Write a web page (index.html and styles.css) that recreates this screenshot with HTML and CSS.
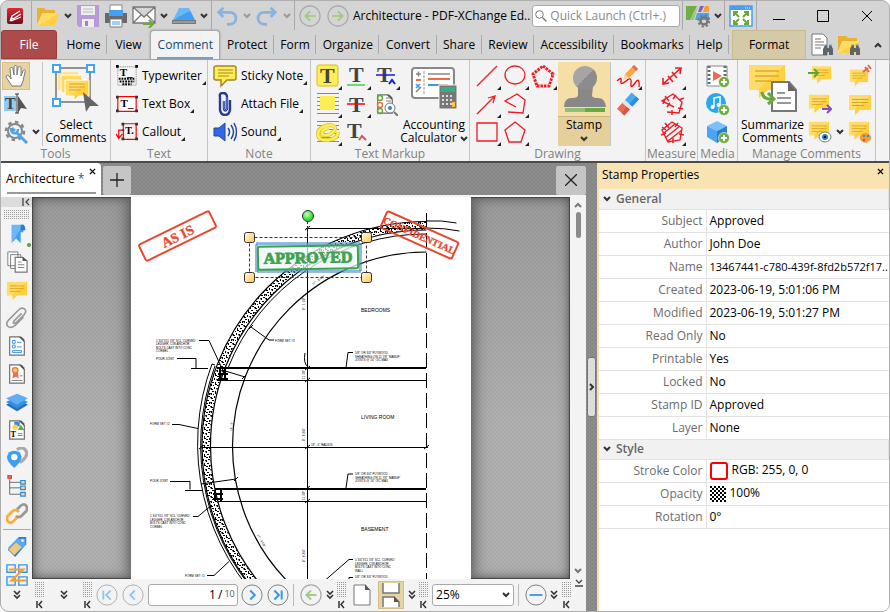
FILE: index.html
```html
<!DOCTYPE html>
<html lang="en">
<head>
    <meta charset="UTF-8">
    <meta name="viewport" content="width=device-width, initial-scale=1.0">
    <title>Architecture - PDF-XChange Editor</title>
    <link rel="stylesheet" href="styles.css">
</head>
<body>
    <!-- Icon sprite -->
    <svg class="sprite" aria-hidden="true">
        <defs>
            <linearGradient id="gold" x1="0" y1="0" x2="1" y2="1"><stop offset=".5" stop-color="#ffdc6a"/><stop offset=".5" stop-color="#ffd040"/></linearGradient>
            <linearGradient id="redlogo" x1="0" y1="0" x2="0" y2="1"><stop offset="0" stop-color="#e02a35"/><stop offset="1" stop-color="#6d0f16"/></linearGradient>
            <linearGradient id="sky" x1="0" y1="0" x2="1" y2="1"><stop offset=".5" stop-color="#6bb8f8"/><stop offset=".5" stop-color="#3fa0f5"/></linearGradient>
            <linearGradient id="grey" x1="0" y1="0" x2="1" y2="1"><stop offset=".5" stop-color="#a5a5a5"/><stop offset=".5" stop-color="#8c8c8c"/></linearGradient>
            <linearGradient id="handle" x1="0" y1="0" x2="1" y2="1"><stop offset="0" stop-color="#fffbe8"/><stop offset="1" stop-color="#ffc64d"/></linearGradient>
            <radialGradient id="knob" cx=".4" cy=".35"><stop offset="0" stop-color="#c4ffb8"/><stop offset="1" stop-color="#35dd35"/></radialGradient>
            <pattern id="checks" width="4" height="4" patternUnits="userSpaceOnUse"><path d="M0 0h2v2h2v2h-2v-2h-2z"/></pattern>
            <pattern id="concrete" width="11" height="9" patternUnits="userSpaceOnUse"><path d="M0 1h2v1h1v1H1zM4 0h1v2H4zM6 1h2v2H7zM9 0h2v1H9zM2 4h2v1H2zM5 4h1v2h1v1H5zM8 4h2v1H8zM0 6h2v2H1zM3 7h1v1H3zM7 7h2v1H7zM10 6h1v2h-1z" fill="#000"/></pattern>
        </defs>

        <symbol id="chev" viewBox="0 0 8 6"><path d="M1 1l3 3 3-3" fill="none" stroke="currentColor" stroke-width="2"/></symbol>
        <symbol id="dchev" viewBox="0 0 8 10"><path d="M1 1l3 3 3-3M1 5l3 3 3-3" fill="none" stroke="#333" stroke-width="1.6"/></symbol>
        <symbol id="grip" viewBox="0 0 9 27"><g stroke="#999" stroke-dasharray="1 1"><path d="M.5 0v16M2.5 0v16M4.5 0v16M6.5 0v16M8.5 0v16"/></g><path d="M2 19v7M7 19L4 22.500l3 3.500" fill="none" stroke="#333" stroke-width="1.500"/></symbol>
        <symbol id="note" viewBox="0 0 24 24"><path d="M1 3h22v15H12l-5 5v-5H1z" fill="url(#gold)"/><path d="M4 7.500h16M4 10.500h16M4 13.500h12" stroke="#d9a51c"/></symbol>
        <symbol id="paper" viewBox="0 0 24 24"><path d="M4 2h11l5 5v15H4z" fill="#fff" stroke="#707070" stroke-width="1.300"/><path d="M14 2l6 6V5l-3-3z" fill="#555"/></symbol>
        <symbol id="binoc" viewBox="0 0 12 12"><path d="M1 5l2-4h2v3h2V1h2l2 4v6H7V8H5v3H1z" fill="#5f6468"/><path d="M2 1h3M7 1h3" stroke="#55aaf0"/></symbol>
        <symbol id="plus" viewBox="0 0 12 12"><circle cx="6" cy="6" r="5.500" fill="#6fae3c" stroke="#fff" stroke-width=".6"/><path d="M6 3v6M3 6h6" stroke="#fff" stroke-width="2"/></symbol>

        <symbol id="logo" viewBox="0 0 16 16"><rect width="16" height="16" rx="2" fill="url(#redlogo)"/><path d="M3 13l2-5 8-5M6 11l8-5M4 13l10-4M3 13l3-3" stroke="#fff" stroke-width="1.300" fill="none"/></symbol>
        <symbol id="open" viewBox="0 0 24 24"><path d="M1 4h7l2 2h9v5H6L1 20z" fill="#e9b22c"/><path d="M6 9h17l-4 13H1z" fill="url(#gold)"/></symbol>
        <symbol id="save" viewBox="0 0 24 24"><path d="M1 1h22v22H3l-2-2z" fill="#b79ad8"/><path d="M5 2h14v9H5z" fill="#eee"/><path d="M7 5h10M7 8h10" stroke="#bbb"/><path d="M6 15h12v8H6z" fill="#eee"/><path d="M9 17h3v5H9z" fill="#a080c8"/></symbol>
        <symbol id="print" viewBox="0 0 24 24"><path d="M6 1h12v7H6z" fill="#fff" stroke="#888"/><path d="M1 9h4V6h14v3h4v10H1z" fill="#696969"/><path d="M5 6h14v6H5z" fill="#439ff0"/><path d="M6 15h12v8H6z" fill="#fff" stroke="#777"/><path d="M8 18h8M8 20h8" stroke="#439ff0"/></symbol>
        <symbol id="mail" viewBox="0 0 24 24"><path d="M1 3h22v16H1zM1 3l11 10L23 3M1 19l8-8M23 19l-8-8" fill="#fff" stroke="#777" stroke-width="1.300"/><path d="M11 20h10M17 16l4 4-4 4" fill="none" stroke="#6aac36" stroke-width="2"/></symbol>
        <symbol id="scan" viewBox="0 0 24 24"><path d="M7 4h10l6 12H1z" fill="url(#sky)"/><path d="M0 16h24v4H0z" fill="#777"/><path d="M1 18h22" stroke="#bbb"/></symbol>
        <symbol id="undo" viewBox="0 0 24 24"><path d="M8 3L3 8l5 5M3 8h12c9 0 9 13 0 13h-3" fill="none" stroke="#83b4e2" stroke-width="3"/></symbol>
        <symbol id="redo" viewBox="0 0 24 24"><path d="M16 3l5 5-5 5M21 8H9c-9 0-9 13 0 13h3" fill="none" stroke="#83b4e2" stroke-width="3"/></symbol>
        <symbol id="back" viewBox="0 0 24 24"><circle cx="12" cy="12" r="11" fill="none" stroke="#a9a9a9" stroke-width="1.300"/><path d="M18 12H7M12 7l-5 5 5 5" fill="none" stroke="#a5cb87" stroke-width="2.200"/></symbol>
        <symbol id="fwd" viewBox="0 0 24 24"><circle cx="12" cy="12" r="11" fill="none" stroke="#a9a9a9" stroke-width="1.300"/><path d="M6 12h11M12 7l5 5-5 5" fill="none" stroke="#a5cb87" stroke-width="2.200"/></symbol>
        <symbol id="search" viewBox="0 0 12 12"><circle cx="4.500" cy="4.500" r="3.800" fill="none" stroke="#777"/><path d="M7.500 7.500l4 4" stroke="#777" stroke-width="1.300"/></symbol>
        <symbol id="theme" viewBox="0 0 24 24"><path d="M0 2h11L4 16H0z" fill="#70ad47"/><path d="M12 2L8 16H4z" fill="#9bc96f"/><path d="M14 2h4l-3 6h-3z" fill="#8858d0"/><path d="M19 2h4v6h-6z" fill="#f59b38"/><path d="M11 9h12v7H9z" fill="#4da3ef"/><circle cx="18" cy="17" r="3.500" fill="none" stroke="#777" stroke-width="2.500"/><circle cx="18" cy="17" r="5.500" fill="none" stroke="#777" stroke-width="2" stroke-dasharray="2.200 2.100"/></symbol>
        <symbol id="full" viewBox="0 0 24 24"><path d="M1 2h22v20H1z" fill="#fff" stroke="#469ff0" stroke-width="1.500"/><path d="M1 2h22v4H1z" fill="#469ff0"/><path d="M16 4h5" stroke="#fff" stroke-dasharray="1 1"/><path d="M5 12V8h4M15 8h4v4M5 16v4h4M19 16v4h-4M5 8l5 5M19 8l-5 5M5 20l5-5M19 20l-5-5" fill="none" stroke="#6aa83c" stroke-width="2"/></symbol>
        <symbol id="finddoc" viewBox="0 0 24 24"><path d="M2 1h11l4 4v17H2z" fill="#fff" stroke="#777"/><path d="M5 6h6M5 9h9M5 12h9M5 15h6" stroke="#777"/><use href="#binoc" x="12" y="11" width="12" height="12"/></symbol>
        <symbol id="finddir" viewBox="0 0 24 24"><path d="M1 3h8l2 2h9v4H5L1 18z" fill="#e9b22c"/><path d="M5 8h18l-4 12H1z" fill="url(#gold)"/><use href="#binoc" x="12" y="11" width="12" height="12"/></symbol>

        <symbol id="hand" viewBox="0 0 24 24"><path d="M8 22L2 13c0-2 2-2 3-1l2 3L6 5c0-2 3-2 3 0l1 6V3c0-2 3-2 3 0v8l1-7c0-2 3-2 3 0v8l2-5c1-2 3-1 2 1l-2 9-2 5z" fill="#fff" stroke="#777"/></symbol>
        <symbol id="gear" viewBox="0 0 24 24"><circle cx="11" cy="11" r="7" fill="none" stroke="#888" stroke-width="2"/><circle cx="11" cy="11" r="9" fill="none" stroke="#888" stroke-width="2.500" stroke-dasharray="3.500 3.500"/><path d="M12 12l11 11" stroke="#4ea3ea" stroke-width="3"/><path d="M7 8c0 7 7 7 7 1M8 8l3 3" fill="none" stroke="#4ea3ea" stroke-width="2.500"/></symbol>
        <symbol id="selcom" viewBox="0 0 48 48"><path d="M4 4h34v34H4z" fill="none" stroke="#929292" stroke-width="2"/><path d="M6 8h20v18H6z" fill="#ffe28a"/><path d="M9 11h21v18H9z" fill="#ffd95e" stroke="#fff"/><path d="M13 16h24v16H27l-5 5v-5h-9z" fill="url(#gold)" stroke="#fff"/><path d="M17 20h16M17 23h16M17 26h12" stroke="#d9a51c"/><g fill="#fff" stroke="#43a3f4" stroke-width="2"><path d="M1 1h7v7H1zM35 1h7v7h-7zM1 35h7v7H1z"/></g><path d="M31 28l16 14-9 0-4 6z" fill="#666"/></symbol>
        <symbol id="sticky" viewBox="0 0 24 24"><path d="M3 2h18q2 0 2 2v10q0 2-2 2h-7l-6 6v-6H3q-2 0-2-2V4q0-2 2-2z" fill="#ffee55" stroke="#a48724" stroke-width="1.500"/><path d="M5 6h15M5 9h15M5 12h11" stroke="#a48724"/></symbol>
        <symbol id="attach" viewBox="0 0 24 24"><path d="M11 9v8q1 3 3 0V5q0-4-4-4T7 5v13q1 5 5 5t5-5V8" fill="none" stroke="#253b8f" stroke-width="2.400"/><path d="M11 9v8q1 3 3 0V5" fill="none" stroke="#6f89dd"/></symbol>
        <symbol id="sound" viewBox="0 0 24 24"><path d="M1 8h5l6-5v18l-6-5H1z" fill="#3366e8" stroke="#22459e"/><path d="M15 8q3 4 0 8M18 5q5 7 0 14M21 3q5 9 0 18" fill="none" stroke="#2d48a6" stroke-width="1.500"/></symbol>
        <symbol id="area" viewBox="0 0 24 24"><path d="M1 1.500h22M1 5.500h22M1 9.500h22M1 13.500h22M1 17.500h22M1 21.500h22" stroke="#888"/><path d="M4 4h15v14H4z" fill="#ffed55"/></symbol>
        <symbol id="check" viewBox="0 0 24 24"><use href="#paper" width="22" height="24"/><path d="M12 6h5M12 9h5M12 19h4" stroke="#777"/><circle cx="6" cy="6" r="2.500" fill="none" stroke="#68a93e" stroke-width="1.500"/><circle cx="6" cy="13" r="2.500" fill="none" stroke="#f07145" stroke-width="1.500"/><circle cx="6" cy="19" r="2.500" fill="none" stroke="#68a93e" stroke-width="1.500"/><circle cx="16" cy="16" r="5" fill="#fff" stroke="#777"/><circle cx="16" cy="16" r="2" fill="#2489da"/><path d="M20 20l4 4" stroke="#777" stroke-width="2"/></symbol>
        <symbol id="scribble" viewBox="0 0 24 24"><path d="M1 1.500h22M1 5.500h22M1 9.500h22M1 13.500h22M1 17.500h22M1 21.500h22" stroke="#888"/><path d="M13 8q-7 1-7 5t9 1q9-8-2-9Q2 7 2 14t10 6 10-8" fill="none" stroke="#d9c62c" stroke-width="4"/><path d="M13 8q-7 1-7 5t9 1q9-8-2-9Q2 7 2 14t10 6 10-8" fill="none" stroke="#ffed55" stroke-width="2.500"/></symbol>
        <symbol id="calc" viewBox="0 0 48 44"><rect x="2" y="2" width="42" height="30" rx="3" fill="#fff" stroke="#888" stroke-width="2"/><path d="M14 5v24" stroke="#999" stroke-dasharray="3 1"/><path d="M18 8h22M18 19h20" stroke="#888" stroke-width="1.500"/><path d="M18 13h22" stroke="#f06c43" stroke-width="2"/><path d="M18 19h10" stroke="#399be8" stroke-width="2"/><path d="M6 8h5M8.500 5.500v5M6 26l5-5" stroke="#888" stroke-width="1.500"/><path d="M6 14h5" stroke="#f06c43" stroke-width="2"/><path d="M6 18l4 4M10 18l-4 4" stroke="#399be8" stroke-width="1.500"/><rect x="29" y="19" width="18" height="24" rx="1" fill="#777" stroke="#f4f4f4"/><path d="M31 21h14v5H31z" fill="#37ad82"/><path d="M32 30h12M32 34h12M32 38h12" stroke="#ddd" stroke-width="2" stroke-dasharray="2 2"/><path d="M42 36h3v5h-3z" fill="#ffc23c"/></symbol>
        <symbol id="line" viewBox="0 0 24 24"><path d="M2 22L22 2" stroke="#ed1c24" stroke-width="1.300"/></symbol>
        <symbol id="oval" viewBox="0 0 24 24"><ellipse cx="12" cy="11" rx="10" ry="9" fill="none" stroke="#ed1c24" stroke-width="1.300"/></symbol>
        <symbol id="cloud" viewBox="0 0 24 24"><path d="M12 2l10 8-4 12H6L2 10z" fill="none" stroke="#ed1c24" stroke-width="3" stroke-linejoin="round" stroke-dasharray="2.500 1"/><path d="M12 4l8 7-3 9H7L4 11z" fill="#f3f3f3"/></symbol>
        <symbol id="arrow" viewBox="0 0 24 24"><path d="M2 22L20 4M13 6l7-2-2 7" fill="none" stroke="#ed1c24" stroke-width="1.300"/></symbol>
        <symbol id="polyl" viewBox="0 0 24 24"><path d="M13 15L2 9l12-7 8 6-2 13-15-1" fill="none" stroke="#ed1c24" stroke-width="1.300"/></symbol>
        <symbol id="rect" viewBox="0 0 24 24"><path d="M2 3h20v18H2z" fill="none" stroke="#ed1c24" stroke-width="1.300"/></symbol>
        <symbol id="poly" viewBox="0 0 24 24"><path d="M12 2l10 8-4 12H6L2 10z" fill="none" stroke="#ed1c24" stroke-width="1.300"/></symbol>
        <symbol id="stampi" viewBox="0 0 48 48"><path d="M18 22h15l-1 10q1 2 6 2 7 0 8 9H4q0-9 8-9 6 0 6-3z" fill="#888"/><circle cx="25" cy="14" r="12" fill="url(#grey)"/><path d="M5 46h40" stroke="#69a941" stroke-width="4"/><path d="M5 46h20" stroke="#93bf73" stroke-width="4"/></symbol>
        <symbol id="pencil" viewBox="0 0 24 24"><path d="M9 10L18 1l4 4-9 9-5 1z" fill="#f9a83d"/><path d="M18 1l4 4-2 2-4-4z" fill="#eb6656"/><path d="M9 10l4 4-6 2z" fill="#efd7b5"/><path d="M1 17q5-5 4 0t5 0 5 2 4 0 4 4" fill="none" stroke="#f00" stroke-width="1.300"/></symbol>
        <symbol id="eraser" viewBox="0 0 24 24"><g transform="rotate(-48 12 12)"><path d="M1 7h9v10H1z" fill="#ec6955"/><path d="M9 7h4v10H9z" fill="#e4e4e4"/><path d="M13 7h10v10H13z" fill="#4da8f2"/><path d="M1 13h8v4H1z" fill="#d95543"/><path d="M13 13h10v4H13z" fill="#2f8de0"/></g></symbol>
        <symbol id="dist" viewBox="0 0 24 24"><path d="M3 20L21 4M3 14v6l6-1M15 4h6l-1 6M8 12l5 6M12 8l5 6" fill="none" stroke="#ed1c24" stroke-width="1.600"/></symbol>
        <symbol id="perim" viewBox="0 0 24 24"><path d="M14 15L2 9l11-7 9 8-3 11-12-1" fill="none" stroke="#ed1c24" stroke-width="1.400"/><path d="M5 4l4 5M16 3l-3 4M19 8l5-2M18 16l5 1M12 18v5M5 7l-2 5M10 11l-3 4" stroke="#ed1c24" stroke-width="1.500"/></symbol>
        <symbol id="areaM" viewBox="0 0 24 24"><path d="M12 2l10 6-2 12-12 2-6-12zM4 13L15 4M5 18L20 6M8 21L22 10" fill="none" stroke="#ed1c24" stroke-width="1.400"/><path d="M5 3l4 5M18 3l-3 4M19 14l5 1M13 18v5M1 15l5-2M2 7l4 3" stroke="#ed1c24" stroke-width="1.500"/></symbol>
        <symbol id="video" viewBox="0 0 24 24"><path d="M1 2h20v20H1z" fill="#fff" stroke="#888"/><path d="M3 2v20M19 2v20" stroke="#5b6f7a" stroke-width="3" stroke-dasharray="2 2"/><path d="M7 7l9 5-9 5z" fill="#f0684f"/><use href="#plus" x="12" y="12" width="12" height="12"/></symbol>
        <symbol id="music" viewBox="0 0 24 24"><circle cx="10" cy="11" r="10" fill="#28a8ee"/><path d="M8 15V6l6-1v8" fill="none" stroke="#fff" stroke-width="1.500"/><circle cx="6.500" cy="15" r="2" fill="#fff"/><circle cx="12.500" cy="13" r="2" fill="#fff"/><use href="#plus" x="12" y="12" width="12" height="12"/></symbol>
        <symbol id="cube" viewBox="0 0 24 24"><path d="M11 1l10 5-10 5L1 6z" fill="#7bc0f8"/><path d="M1 6l10 5v12L1 17z" fill="#4aa6f2"/><path d="M21 6l-10 5v12l10-6z" fill="#287fce"/><use href="#plus" x="12" y="12" width="12" height="12"/></symbol>
        <symbol id="summ" viewBox="0 0 48 48"><path d="M0 1h36v25H19l-9 8v-8H0z" fill="url(#gold)"/><path d="M6 7h24M6 12h24M6 17h16" stroke="#e0aa22" stroke-width="1.500"/><path d="M23 18h17l7 8v21H23z" fill="#fff" stroke="#777" stroke-width="2"/><path d="M39 18v9h8z" fill="#666"/><path d="M28 29h8M28 34h14M28 39h14" stroke="#777" stroke-width="1.500"/><path d="M13 28q1 8 10 7M19 29l6 6-6 5" fill="none" stroke="#67a93a" stroke-width="3"/></symbol>
        <symbol id="nin" viewBox="0 0 24 24"><use href="#note" x="3" y="-1" width="21" height="22"/><path d="M0 9h9M6 5l4 4-4 4" fill="none" stroke="#5fa532" stroke-width="2"/></symbol>
        <symbol id="nout" viewBox="0 0 24 24"><use href="#note" width="22" height="22"/><path d="M14 17h9M19 13l4 4-4 4" fill="none" stroke="#804dc9" stroke-width="2"/></symbol>
        <symbol id="neye" viewBox="0 0 24 24"><use href="#note" y="-1" width="22" height="22"/><ellipse cx="17" cy="17" rx="6" ry="5" fill="#fff" stroke="#777"/><circle cx="17" cy="17" r="3" fill="#2884cc"/><circle cx="17" cy="17" r="1.300"/></symbol>
        <symbol id="npin" viewBox="0 0 24 24"><use href="#note" y="3" width="22" height="20"/><path d="M15 8l5-4M17 3l4 5M20 1l3 4" stroke="#df654f" stroke-width="2"/></symbol>
        <symbol id="npal" viewBox="0 0 24 24"><use href="#note" y="-1" width="22" height="22"/><path d="M12 16q3-5 9-2 3 2 2 6-3 0-4 3-8 0-7-7z" fill="#f29c37"/><path d="M15 16h2M19 16h2" stroke="#3089da" stroke-width="2"/><path d="M15 20h2" stroke="#d24b3a" stroke-width="2"/></symbol>

        <symbol id="bmark" viewBox="0 0 24 24"><path d="M6 2h13v8h-3v12l-5-5-5 5z" fill="url(#sky)"/><path d="M16 2h3q2 1 2 6h-5z" fill="#2c7cc7"/></symbol>
        <symbol id="pages" viewBox="0 0 24 24"><path d="M2 1h11v15H2zM5 4h11v15H5z" fill="#fff" stroke="#777"/><path d="M10 7h8l5 4v12H10z" fill="#fff" stroke="#777" stroke-width="1.300"/><path d="M18 6v5h5z" fill="#555"/><path d="M13 12h4M13 15h7M13 18h7" stroke="#777"/></symbol>
        <symbol id="clip" viewBox="0 0 24 24"><path d="M17 7L9 15q-2 3 0 3t11-10q3-4 0-6t-6 1L3 14q-4 4-1 7t8-1l9-9" fill="none" stroke="#999" stroke-width="1.800"/></symbol>
        <symbol id="fields" viewBox="0 0 24 24"><use href="#paper" width="24" height="24"/><path d="M7 6h3v3H7zM7 11h3v3H7zM7 17h10v2H7z" fill="none" stroke="#2d8cde"/><path d="M12 8h5M12 13h5" stroke="#2d8cde"/></symbol>
        <symbol id="cert" viewBox="0 0 24 24"><use href="#paper" width="24" height="24"/><path d="M8 10l-1 7 4-2 3 2-1-7z" fill="#ed7150"/><circle cx="10" cy="8" r="3" fill="#ffd14f" stroke="#ed7150" stroke-width="1.500"/><path d="M6 19h12M15 14h3" stroke="#777"/></symbol>
        <symbol id="layers" viewBox="0 0 24 24"><path d="M12 9l12 6-12 7L0 15z" fill="#2370b8"/><path d="M12 6l12 6-12 7L0 12z" fill="#378fdf"/><path d="M12 3l12 5-12 7L0 8z" fill="#5caef5"/></symbol>
        <symbol id="pins" viewBox="0 0 24 24"><path d="M12 3q5-4 9 0 4 5-2 11l-4 3" fill="none" stroke="#aaa" stroke-width="3.500"/><path d="M9 23Q1 16 1 11q1-7 8-7 7 0 8 7 0 5-8 12z" fill="#3d9ff2"/><circle cx="9" cy="11" r="3.500" fill="#fff"/></symbol>
        <symbol id="tree" viewBox="0 0 24 24"><path d="M4 5v16h14M4 8h14M4 14h14" fill="none" stroke="#666"/><path d="M2 0h4v4H2z" fill="#ff5e3d" stroke="#bd4b38"/><path d="M16 6h5v4h-5zM16 12h5v4h-5zM16 19h5v4h-5z" fill="#ffd85c" stroke="#268ce6" stroke-width="1.300"/></symbol>
        <symbol id="link" viewBox="0 0 24 24"><path d="M12 7l4-4q4-3 6 0t0 6l-5 5q-4 3-6 0" fill="none" stroke="#999" stroke-width="3"/><path d="M12 16l-4 4q-4 3-6 0t0-6l5-5q4-3 7 1" fill="none" stroke="#ffad33" stroke-width="3"/></symbol>
        <symbol id="tag" viewBox="0 0 24 24"><path d="M14 1h8v8L10 23l-8-8z" fill="#2381d3"/><path d="M12 3h9v7L10 20l-8-7z" fill="#55abf5"/><path d="M11 7l6 5-8 9-6-6z" fill="#f5c77e"/><circle cx="18" cy="5" r="1.500" fill="#fff"/></symbol>
        <symbol id="artic" viewBox="0 0 24 24"><path d="M1 1h9v8H1zM14 1h9v8h-9zM1 14h9v9H1zM14 14h9v9h-9z" fill="none" stroke="#3496ed" stroke-width="1.500"/><path d="M3 6h16L6 18h16" fill="none" stroke="#ff9b21" stroke-width="2.200"/></symbol>

        <symbol id="first" viewBox="0 0 24 24"><circle cx="12" cy="12" r="11" fill="none" stroke="#aaa"/><path d="M8 7v10M16 7l-5 5 5 5" fill="none" stroke="#90c6f2" stroke-width="2"/></symbol>
        <symbol id="prev" viewBox="0 0 24 24"><circle cx="12" cy="12" r="11" fill="none" stroke="#aaa"/><path d="M14 7l-5 5 5 5" fill="none" stroke="#90c6f2" stroke-width="2"/></symbol>
        <symbol id="next" viewBox="0 0 24 24"><circle cx="12" cy="12" r="11" fill="none" stroke="#777"/><path d="M10 7l5 5-5 5" fill="none" stroke="#3499ee" stroke-width="2.200"/></symbol>
        <symbol id="last" viewBox="0 0 24 24"><circle cx="12" cy="12" r="11" fill="none" stroke="#777"/><path d="M8 7l5 5-5 5M16 7v10" fill="none" stroke="#3499ee" stroke-width="2.200"/></symbol>
        <symbol id="minus" viewBox="0 0 24 24"><circle cx="12" cy="12" r="11" fill="none" stroke="#777"/><path d="M5 12h14" stroke="#3499ee" stroke-width="2"/></symbol>
        <symbol id="single" viewBox="0 0 24 24"><path d="M4 2h11l5 5v15H4z" fill="#fff" stroke="#777"/><path d="M15 1v6h5z" fill="#555"/></symbol>
        <symbol id="contin" viewBox="0 0 24 24"><path d="M4 0v10h16V0M4 24V14h11l5 5v5" fill="#fff" stroke="#777" stroke-width="1.500"/><path d="M15 13v6h5z" fill="#555"/></symbol>
    </svg>

    <!-- Icons with a letter in them -->
    <svg class="letters" aria-hidden="true">
        <symbol id="textsel" viewBox="0 0 24 24"><path d="M0 4h12v15H0z" fill="#91c9f7"/><text x="1" y="17" font-size="16" class="glyph" fill="#444">T</text><path d="M11 2h4M11 21h4M13 2v19" stroke="#333"/><path d="M14 4l9 13-6-1-3 5z" fill="#555"/></symbol>
        <symbol id="typew" viewBox="0 0 24 24"><path d="M2 2h20v20H2z" fill="#f4f4f4" stroke="#777" stroke-dasharray="1 1"/><text x="4" y="12" font-size="12" class="glyph">T_</text><path d="M3 15h18M4 18h16M7 21h10" stroke="#000" stroke-width="2" stroke-dasharray="2 1"/><path d="M0 0h3v3H0zM21 0h3v3h-3z"/></symbol>
        <symbol id="tbox" viewBox="0 0 24 24"><path d="M2 4h20v16H2z" fill="#fff" stroke="#f00" stroke-width="1.300"/><text x="5" y="15" font-size="12" class="glyph">T_</text><path d="M0 3h3v3H0zM21 3h3v3h-3zM0 18h3v3H0zM21 18h3v3h-3z" fill="#333"/></symbol>
        <symbol id="callout" viewBox="0 0 24 24"><path d="M8 3h14v17H8zM8 10H3v9M0 14l3 5 4-5" fill="none" stroke="#f00" stroke-width="1.300"/><text x="10" y="14" font-size="11" class="glyph">T.</text><path d="M6 2h3v3H6zM21 2h3v3h-3zM6 18h3v3H6zM21 18h3v3h-3zM7 9h2v2H7z" fill="#333"/></symbol>
        <symbol id="hl" viewBox="0 0 24 24"><rect x="1" y="1" width="21" height="21" rx="2" fill="#ffed55" stroke="#d7bd25"/><text x="4" y="19" font-size="22" class="glyph" fill="#444">T</text></symbol>
        <symbol id="under" viewBox="0 0 24 24"><text x="4" y="18" font-size="22" class="glyph" fill="#444">T</text><path d="M2 21h18" stroke="#3bd43b" stroke-width="1.500"/></symbol>
        <symbol id="tstrike" viewBox="0 0 24 24"><text x="3" y="18" font-size="22" class="glyph" fill="#444">T</text><path d="M2 11h19" stroke="#1717f0" stroke-width="1.500"/><path d="M15 20l3-4 3 4" fill="none" stroke="#1717f0" stroke-width="2"/></symbol>
        <symbol id="strike" viewBox="0 0 24 24"><text x="4" y="20" font-size="22" class="glyph" fill="#444">T</text><path d="M2 12h18" stroke="#f00" stroke-width="1.500"/></symbol>
        <symbol id="insert" viewBox="0 0 24 24"><text x="2" y="18" font-size="22" class="glyph" fill="#444">T</text><path d="M14 20l3-4 4 4" fill="none" stroke="#e34d4d" stroke-width="2"/></symbol>
        <symbol id="content" viewBox="0 0 24 24"><use href="#paper" width="24" height="24"/><path d="M9 3h6v5H9z" fill="#388edb"/><circle cx="10" cy="9" r="3" fill="#ffd14f"/><path d="M16 6l4 6h-7z" fill="#60ad3a"/><text x="5" y="20" font-size="9" class="glyph">T</text><path d="M13 16h5M13 18h5" stroke="#777"/></symbol>
    </svg>

    <div class="window">
        <header class="titlebar">
            <svg class="i16 logo"><use href="#logo"/></svg>
            <div class="quick">
                <button title="Open"><svg class="i24"><use href="#open"/></svg></button>
                <button title="Open menu"><svg class="chev"><use href="#chev"/></svg></button>
                <button title="Save"><svg class="i24"><use href="#save"/></svg></button>
                <button title="Print"><svg class="i24"><use href="#print"/></svg></button>
                <button title="Email"><svg class="i24"><use href="#mail"/></svg></button>
                <button title="Email menu"><svg class="chev"><use href="#chev"/></svg></button>
                <button title="Scan"><svg class="i24"><use href="#scan"/></svg></button>
                <button title="Scan menu"><svg class="chev"><use href="#chev"/></svg></button>
            </div>
            <div class="quick history">
                <button title="Undo"><svg class="i22"><use href="#undo"/></svg></button>
                <button title="Undo menu"><svg class="chev dim"><use href="#chev"/></svg></button>
                <button title="Redo"><svg class="i22"><use href="#redo"/></svg></button>
                <button title="Redo menu"><svg class="chev dim"><use href="#chev"/></svg></button>
            </div>
            <div class="quick views">
                <button title="Previous view"><svg class="i22"><use href="#back"/></svg></button>
                <button title="Next view"><svg class="i22"><use href="#fwd"/></svg></button>
            </div>
            <h1 class="title">Architecture - PDF-XChange Ed..</h1>
            <label class="search">
                <svg class="i12"><use href="#search"/></svg>
                <input type="text" aria-label="Quick Launch" placeholder="Quick Launch (Ctrl+.)">
            </label>
            <div class="quick themes">
                <button title="Theme"><svg class="i24"><use href="#theme"/></svg></button>
                <button title="Theme menu"><svg class="chev"><use href="#chev"/></svg></button>
            </div>
            <div class="quick fullscreen">
                <button title="Full screen"><svg class="i24"><use href="#full"/></svg></button>
            </div>
            <div class="winctl">
                <button title="Minimize"><svg class="i12" viewBox="0 0 12 12"><path d="M0 9.500h12" stroke="#000"/></svg></button>
                <button title="Maximize"><svg class="i12" viewBox="0 0 12 12"><path d="M.5.5h11v11H.5z" fill="none" stroke="#000"/></svg></button>
                <button title="Close"><svg class="i12" viewBox="0 0 12 12"><path d="M1 1l10 10M11 1L1 11" stroke="#000"/></svg></button>
            </div>
        </header>

        <nav class="tabs">
            <button class="tab file">File</button>
            <button class="tab">Home</button>
            <button class="tab no-sep">View</button>
            <button class="tab active">Comment</button>
            <button class="tab">Protect</button>
            <button class="tab">Form</button>
            <button class="tab">Organize</button>
            <button class="tab">Convert</button>
            <button class="tab">Share</button>
            <button class="tab">Review</button>
            <button class="tab">Accessibility</button>
            <button class="tab">Bookmarks</button>
            <button class="tab">Help</button>
            <button class="tab format">Format</button>
            <div class="tab-tools">
                <button title="Find"><svg class="i24"><use href="#finddoc"/></svg></button>
                <button title="Search"><svg class="i24"><use href="#finddir"/></svg></button>
                <button class="collapse" title="Collapse ribbon"><svg class="chev"><use href="#chev"/></svg></button>
            </div>
        </nav>

        <section class="ribbon">
            <div class="group">
                <div class="group-body">
                    <div class="stack">
                        <button class="tool on" title="Hand"><svg class="i24"><use href="#hand"/></svg></button>
                        <button class="tool" title="Select text"><svg class="i24"><use href="#textsel"/></svg></button>
                        <button class="tool" title="Settings"><svg class="i24"><use href="#gear"/></svg></button>
                    </div>
                    <button class="more" title="More tools"><svg class="chev"><use href="#chev"/></svg></button>
                    <button class="big rule"><svg class="i48"><use href="#selcom"/></svg><span>Select<br>Comments</span></button>
                </div>
                <h2>Tools</h2>
            </div>
            <div class="group">
                <div class="group-body rows">
                    <button class="row"><svg class="i22"><use href="#typew"/></svg><span class="drop">Typewriter</span></button>
                    <button class="row"><svg class="i22"><use href="#tbox"/></svg><span class="drop">Text Box</span></button>
                    <button class="row"><svg class="i22"><use href="#callout"/></svg><span class="drop">Callout</span></button>
                </div>
                <h2>Text</h2>
            </div>
            <div class="group">
                <div class="group-body rows">
                    <button class="row"><svg class="i24"><use href="#sticky"/></svg><span class="drop">Sticky Note</span></button>
                    <button class="row"><svg class="i24"><use href="#attach"/></svg><span class="drop">Attach File</span></button>
                    <button class="row"><svg class="i24"><use href="#sound"/></svg><span class="drop">Sound</span></button>
                </div>
                <h2>Note</h2>
            </div>
            <div class="group">
                <div class="group-body">
                    <div class="icons markup">
                        <button class="tool drop" title="Highlight"><svg class="i24"><use href="#hl"/></svg></button>
                        <button class="tool drop" title="Highlight area"><svg class="i24"><use href="#area"/></svg></button>
                        <button class="tool drop" title="Highlight brush"><svg class="i24"><use href="#scribble"/></svg></button>
                        <button class="tool drop" title="Underline"><svg class="i24"><use href="#under"/></svg></button>
                        <button class="tool drop" title="Strikeout"><svg class="i24"><use href="#strike"/></svg></button>
                        <button class="tool drop" title="Insert text"><svg class="i24"><use href="#insert"/></svg></button>
                        <button class="tool drop" title="Replace text"><svg class="i24"><use href="#tstrike"/></svg></button>
                        <button class="tool" title="Check spelling"><svg class="i24"><use href="#check"/></svg></button>
                    </div>
                    <button class="big"><svg class="i48"><use href="#calc"/></svg><span>Accounting<br>Calculator <svg class="chev"><use href="#chev"/></svg></span></button>
                </div>
                <h2>Text Markup</h2>
            </div>
            <div class="group">
                <div class="group-body">
                    <div class="icons">
                        <button class="tool drop" title="Line"><svg class="i24"><use href="#line"/></svg></button>
                        <button class="tool drop" title="Arrow"><svg class="i24"><use href="#arrow"/></svg></button>
                        <button class="tool drop" title="Rectangle"><svg class="i24"><use href="#rect"/></svg></button>
                        <button class="tool drop" title="Oval"><svg class="i24"><use href="#oval"/></svg></button>
                        <button class="tool drop" title="Polyline"><svg class="i24"><use href="#polyl"/></svg></button>
                        <button class="tool drop" title="Polygon"><svg class="i24"><use href="#poly"/></svg></button>
                        <button class="tool drop" title="Cloud"><svg class="i24"><use href="#cloud"/></svg></button>
                    </div>
                    <button class="big stamp"><svg class="i48"><use href="#stampi"/></svg><span>Stamp<br><svg class="chev"><use href="#chev"/></svg></span></button>
                    <div class="stack rule pens">
                        <button class="tool drop" title="Pencil"><svg class="i24"><use href="#pencil"/></svg></button>
                        <button class="tool" title="Eraser"><svg class="i24"><use href="#eraser"/></svg></button>
                    </div>
                </div>
                <h2>Drawing</h2>
            </div>
            <div class="group">
                <div class="group-body center">
                    <div class="stack">
                        <button class="tool drop" title="Distance"><svg class="i24"><use href="#dist"/></svg></button>
                        <button class="tool drop" title="Perimeter"><svg class="i24"><use href="#perim"/></svg></button>
                        <button class="tool drop" title="Area"><svg class="i24"><use href="#areaM"/></svg></button>
                    </div>
                </div>
                <h2>Measure</h2>
            </div>
            <div class="group">
                <div class="group-body center">
                    <div class="stack">
                        <button class="tool" title="Video"><svg class="i24"><use href="#video"/></svg></button>
                        <button class="tool" title="Audio"><svg class="i24"><use href="#music"/></svg></button>
                        <button class="tool" title="3D"><svg class="i24"><use href="#cube"/></svg></button>
                    </div>
                </div>
                <h2>Media</h2>
            </div>
            <div class="group">
                <div class="group-body">
                    <button class="big"><svg class="i48"><use href="#summ"/></svg><span>Summarize<br>Comments</span></button>
                    <div class="stack">
                        <button class="tool" title="Import comments"><svg class="i24"><use href="#nin"/></svg></button>
                        <button class="tool" title="Export comments"><svg class="i24"><use href="#nout"/></svg></button>
                        <button class="tool" title="Show comments"><svg class="i24"><use href="#neye"/></svg></button>
                    </div>
                    <button class="more" title="Show menu"><svg class="chev"><use href="#chev"/></svg></button>
                    <div class="stack">
                        <button class="tool" title="Keep tool"><svg class="i24"><use href="#npin"/></svg></button>
                        <button class="tool" title="Comments pane"><svg class="i24"><use href="#note"/></svg></button>
                        <button class="tool" title="Comment styles"><svg class="i24"><use href="#npal"/></svg></button>
                    </div>
                </div>
                <h2>Manage Comments</h2>
            </div>
        </section>

        <div class="workspace">
            <main class="viewer">
                <div class="doc-tabs">
                    <div class="doc-tab"><span>Architecture <b>*</b></span><button title="Close tab"><svg class="i6" viewBox="0 0 8 8"><path d="M1 1l6 6M7 1L1 7" stroke="#000" stroke-width="1.500"/></svg></button></div>
                    <button class="sq" title="New tab"><svg class="i16" viewBox="0 0 16 16"><path d="M8 1v14M1 8h14" stroke="#222" stroke-width="1.300"/></svg></button>
                    <button class="sq close" title="Close"><svg class="i12" viewBox="0 0 12 12"><path d="M0 0l12 12M12 0L0 12" stroke="#222" stroke-width="1.300"/></svg></button>
                </div>

                <aside class="sidebar">
                    <button class="pin" title="Collapse"><svg class="i8" viewBox="0 0 8 8"><path d="M1 0v8M7 1L4 4l3 3" fill="none" stroke="#444" stroke-width="1.300"/></svg></button>
                    <div class="dots"></div>
                    <button class="pane open" title="Bookmarks"><svg class="i22"><use href="#bmark"/></svg></button>
                    <button class="pane" title="Thumbnails"><svg class="i22"><use href="#pages"/></svg></button>
                    <button class="pane" title="Comments"><svg class="i22"><use href="#note"/></svg></button>
                    <button class="pane" title="Attachments"><svg class="i22"><use href="#clip"/></svg></button>
                    <button class="pane" title="Fields"><svg class="i22"><use href="#fields"/></svg></button>
                    <button class="pane" title="Signatures"><svg class="i22"><use href="#cert"/></svg></button>
                    <button class="pane" title="Layers"><svg class="i22"><use href="#layers"/></svg></button>
                    <button class="pane" title="Content"><svg class="i22"><use href="#content"/></svg></button>
                    <button class="pane" title="Destinations"><svg class="i22"><use href="#pins"/></svg></button>
                    <button class="pane" title="Structure"><svg class="i22"><use href="#tree"/></svg></button>
                    <button class="pane" title="Links"><svg class="i22"><use href="#link"/></svg></button>
                    <hr>
                    <button class="pane" title="Tags"><svg class="i22"><use href="#tag"/></svg></button>
                    <button class="pane" title="Articles"><svg class="i22"><use href="#artic"/></svg></button>
                    <button class="pane-more" title="More"><svg class="dchev"><use href="#dchev"/></svg></button>
                </aside>

                <div class="canvas">
                    <svg class="page" viewBox="130 197 340 382" preserveAspectRatio="xMidYMin slice">
                        <defs><clipPath id="plan"><path d="M130 197h295.500v382H130z"/></clipPath></defs>
                        <!-- Curved wall -->
                        <g fill="none" stroke="#000" clip-path="url(#plan)">
                            <circle cx="425.500" cy="446" r="220.500" stroke="url(#concrete)" stroke-width="8"/>
                            <circle cx="425.500" cy="446" r="224.500" stroke-width="1.200"/>
                            <circle cx="425.500" cy="446" r="216" stroke-width="1.200"/>
                            <circle cx="425.500" cy="446" r="194" stroke-width="1.200"/>
                            <path d="M227 368A212 212 0 0 1 425.500 234M214 365l-3-1A229 229 0 0 0 269 611M214 366A226 226 0 0 0 272 611"/>
                        </g>
                        <g fill="none" stroke="#000">
                            <path d="M425.500 221q15-1 30 2M425.500 228q18 0 33 3"/>
                            <path d="M306.500 228v351M305 228.500h120M216 380.500h209M201 447.500h226M217 501.500h208"/>
                            <path d="M216 368h209M214 489h211" stroke-width="2"/>
                            <path d="M425.500 213v366" stroke-dasharray="15 5"/>
                            <path d="M198 340.500h10l14 30M176 358.500h19v10M190 368.500h17M250 327l18 13h5M221 370l23 7M171 424.500h7l19 4M169 481.500h20v8M184 490.500h17M200 484l35-5M192 516.500h5l12-10M206 575.500h7l15-14M352 352.500h-5l-2 15M352 474h-5l-2 14M352 559.500h-4l-23 20M352 577.500h-4v4M304 353q-2 10 3 14"/>
                            <path d="M219 369v12M224 369v12M217 374h10M217 379h10M214 490v11M220 490v11M212 494h10M212 499h10" stroke-width="2"/>
                            <path d="M304 230l5-4M304 370l5-4M304 382l5-4M304 449l5-4M304 490l5-4M304 503l5-4M198 449l5-4M423 449l5-4M241 379l4-4M233 481l4-4M248 329l4-4"/>
                        </g>
                        <g class="rooms"><text x="360" y="312">BEDROOMS</text><text x="360" y="419">LIVING ROOM</text><text x="360" y="531">BASEMENT</text></g>
                        <g class="callouts">
                            <text x="155" y="342">1 3/4&#34;X11 7/8&#34; SCL 'CURVED'</text><text x="155" y="345">LEDGER, C/W ANCHOR</text><text x="155" y="349">BOLTS CAST INTO CONC</text><text x="155" y="352">CORBEL</text>
                            <text x="155" y="360">POUR JOINT</text><text x="274" y="342">FORM SET #3</text>
                            <text x="354" y="354">5/8&#34; OR 3/4&#34; PLYWOOD</text><text x="354" y="358">SHEATHING ON 11 7/8&#34; 'MANUF'</text><text x="354" y="361">JOISTS @ 16&#34; O/C MAX</text>
                            <text x="149" y="425">FORM SET #2</text><text x="149" y="482">POUR JOINT</text><text x="310" y="446">18' - 0&#34; RADIUS</text>
                            <text x="354" y="475">5/8&#34; OR 3/4&#34; PLYWOOD</text><text x="354" y="479">SHEATHING ON 11 7/8&#34; 'MANUF'</text><text x="354" y="482">JOISTS @ 16&#34; O/C MAX</text>
                            <text x="149" y="517">1 3/4&#34;X11 7/8&#34; SCL 'CURVED'</text><text x="149" y="521">LEDGER, C/W ANCHOR</text><text x="149" y="524">BOLTS CAST INTO CONC</text><text x="149" y="528">CORBEL</text>
                            <text x="184" y="577">FORM SET #1</text>
                            <text x="354" y="561">1 3/4&#34;X11 7/8&#34; SCL 'CURVED'</text><text x="354" y="565">LEDGER, C/W ANCHOR</text><text x="354" y="568">BOLTS CAST INTO CONC</text><text x="354" y="572">WALL</text><text x="354" y="578">5/8&#34; OR 3/4&#34; PLYWOOD</text>
                            <text transform="translate(304 310) rotate(-90)">8' - 1 1/8&#34;</text><text transform="translate(304 441) rotate(-90)">8' - 0 3/4&#34;</text><text transform="translate(304 562) rotate(-90)">8' - 0 3/4&#34;</text>
                            <text transform="translate(304 379) rotate(-90)">11 7/8&#34;</text><text transform="translate(304 500) rotate(-90)">11 7/8&#34;</text><text transform="translate(231 431) rotate(-85)">16' - 2&#34;</text>
                            <text transform="translate(312 285) rotate(-35)">17' - 3 5/8&#34;</text><text transform="translate(256 535) rotate(60)">17' - 3 5/8&#34;</text>
                        </g>
                        <!-- Stamps -->
                        <g class="stamp-red" transform="translate(176.500 236) rotate(-26)"><rect x="-39" y="-9" width="78" height="18" rx="2"/><text y="5" font-size="14">AS IS</text></g>
                        <g class="stamp-red" transform="translate(418.500 235) rotate(24)"><rect x="-39" y="-9" width="78" height="18" rx="2"/><text y="4" font-size="10">CONFIDENTIAL</text></g>
                        <g class="stamp-green">
                            <rect x="255.500" y="243.500" width="104" height="28" class="halo"/>
                            <g transform="rotate(-1 307 257)"><rect x="257" y="246" width="100" height="23" rx="2"/><text x="307" y="263" font-size="16">APPROVED</text></g>
                        </g>
                        <g stroke="#333">
                            <path d="M248.500 237.500h117v40h-117zM306.500 221v16" fill="none" stroke-dasharray="3 2"/>
                            <g fill="url(#handle)"><rect x="243.500" y="232.500" width="10" height="10" rx="2"/><rect x="360.500" y="232.500" width="10" height="10" rx="2"/><rect x="243.500" y="272.500" width="10" height="10" rx="2"/><rect x="360.500" y="272.500" width="10" height="10" rx="2"/></g>
                            <circle cx="307" cy="216" r="5.500" fill="url(#knob)"/>
                        </g>
                    </svg>
                </div>

                <div class="scroll">
                    <svg class="chev up"><use href="#chev"/></svg>
                    <div class="thumb"></div>
                    <svg class="chev"><use href="#chev"/></svg>
                </div>

                <footer class="statusbar">
                    <svg class="grip"><use href="#grip"/></svg>
                    <svg class="dchev wide"><use href="#dchev"/></svg>
                    <svg class="grip"><use href="#grip"/></svg>
                    <button title="First page"><svg class="i22"><use href="#first"/></svg></button>
                    <button title="Previous page"><svg class="i22"><use href="#prev"/></svg></button>
                    <label class="page-no"><input type="text" aria-label="Page" value="1"><span>/</span><small>10</small></label>
                    <button title="Next page"><svg class="i22"><use href="#next"/></svg></button>
                    <button title="Last page"><svg class="i22"><use href="#last"/></svg></button>
                    <button class="bar" title="Previous view"><svg class="i22"><use href="#back"/></svg></button>
                    <svg class="dchev"><use href="#dchev"/></svg>
                    <svg class="grip"><use href="#grip"/></svg>
                    <button title="Single page"><svg class="i24"><use href="#single"/></svg></button>
                    <button class="on" title="Continuous"><svg class="i24"><use href="#contin"/></svg></button>
                    <svg class="dchev"><use href="#dchev"/></svg>
                    <svg class="grip"><use href="#grip"/></svg>
                    <div class="zoom"><select aria-label="Zoom"><option>25%</option></select><svg class="chev"><use href="#chev"/></svg></div>
                    <button class="bar" title="Zoom out"><svg class="i22"><use href="#minus"/></svg></button>
                    <svg class="dchev"><use href="#dchev"/></svg>
                    <svg class="grip"><use href="#grip"/></svg>
                    <svg class="to-end" viewBox="0 0 8 8"><path d="M1 1l3 3 3-3M0 7h8" fill="none" stroke="#444" stroke-width="1.300"/></svg>
                </footer>

                <div class="gutter">
                    <button title="Hide pane"><svg class="chev"><use href="#chev"/></svg></button>
                </div>
            </main>

            <aside class="props">
                <div class="props-head"><h2>Stamp Properties</h2><button title="Close"><svg class="i6" viewBox="0 0 8 8"><path d="M1 1l6 6M7 1L1 7" stroke="#000" stroke-width="1.500"/></svg></button></div>
                <table>
                    <colgroup><col class="label-col"><col></colgroup>
                    <tbody>
                        <tr class="section"><th colspan="2"><svg class="chev"><use href="#chev"/></svg>General</th></tr>
                        <tr><th>Subject</th><td>Approved</td></tr>
                        <tr><th>Author</th><td>John Doe</td></tr>
                        <tr><th>Name</th><td class="guid">13467441-c780-439f-8fd2b572f17..</td></tr>
                        <tr><th>Created</th><td>2023-06-19, 5:01:06 PM</td></tr>
                        <tr><th>Modified</th><td>2023-06-19, 5:01:27 PM</td></tr>
                        <tr><th>Read Only</th><td>No</td></tr>
                        <tr><th>Printable</th><td>Yes</td></tr>
                        <tr><th>Locked</th><td>No</td></tr>
                        <tr><th>Stamp ID</th><td>Approved</td></tr>
                        <tr><th>Layer</th><td>None</td></tr>
                    </tbody>
                    <tbody>
                        <tr class="section"><th colspan="2"><svg class="chev"><use href="#chev"/></svg>Style</th></tr>
                        <tr><th>Stroke Color</th><td><span class="swatch"></span>RGB: 255, 0, 0</td></tr>
                        <tr><th>Opacity</th><td><svg class="i16 opacity"><rect width="16" height="16" fill="url(#checks)"/></svg>100%</td></tr>
                        <tr><th>Rotation</th><td>0°</td></tr>
                    </tbody>
                </table>
            </aside>
        </div>
    </div>
</body>
</html>
```

FILE: styles.css
```css
* {
    margin: 0;
    padding: 0;
    box-sizing: border-box;
}

body {
    font-family: 'Segoe UI', 'Open Sans', sans-serif;
    font-size: 12px;
    line-height: 16px;
    color: #000;
    background: #fff;
}

button {
    font: inherit;
    color: inherit;
    background: none;
    border: none;
    display: flex;
    align-items: center;
    justify-content: center;
    white-space: nowrap;
}

h1, h2 {
    font-size: 12px;
    font-weight: 400;
}

svg {
    display: block;
    flex: none;
}

/* Icons */
.sprite { position: absolute; width: 0; height: 0; }
.letters { display: none; }
.i6 { width: 7px; height: 7px; }
.i8 { width: 8px; height: 8px; }
.i12 { width: 12px; height: 12px; }
.i16 { width: 16px; height: 16px; }
.i22 { width: 22px; height: 22px; }
.i24 { width: 24px; height: 24px; }
.i48 { width: 48px; height: 48px; }
.chev { width: 8px; height: 6px; color: #333; }
.chev.dim { color: #999; }
.dchev { width: 8px; height: 10px; }
.grip { width: 9px; height: 27px; }

.glyph {
    font-family: 'Liberation Serif', serif;
    font-weight: 700;
}

.window {
    display: flex;
    flex-direction: column;
    height: 100vh;
    border: 1px solid #b0b0b0;
    border-radius: 8px;
    background: #d4d4d4;
    overflow: hidden;
}

/* Title bar */
.titlebar {
    display: flex;
    align-items: center;
    height: 29px;
    flex: none;
}

.logo {
    margin: 0 8px 0 6px;
}

.quick {
    display: flex;
    align-items: center;
    gap: 4px;
    height: 100%;
    padding: 0 3px 0 4px;
    border-left: 1px solid #aaa;
}

.history {
    gap: 5px;
}

.views {
    gap: 6px;
    padding-right: 4px;
}

.title {
    flex: 1;
    white-space: nowrap;
}

.search {
    display: flex;
    align-items: center;
    gap: 3px;
    width: 148px;
    height: 22px;
    margin: 0 2px;
    padding: 0 2px;
    background: #fff;
    border: 1px solid #aaa;
    border-radius: 3px;
}

.search input {
    width: 100%;
    min-width: 0;
    font: inherit;
    border: none;
    outline: none;
}

.search input::placeholder {
    color: #8a8a8a;
}

.themes {
    padding: 0 2px 0 3px;
}

.fullscreen {
    border-right: 1px solid #aaa;
}

.winctl {
    display: flex;
    justify-content: space-between;
    width: 132px;
    padding: 0 16px;
}

/* Ribbon tabs */
.tabs {
    display: flex;
    height: 30px;
    flex: none;
    border-bottom: 1px solid #aaa;
}

.tab {
    position: relative;
    flex: 1 1 auto;
    padding: 0 6px;
}

.tab.no-sep {
    padding: 0 8px;
}

.tab:not(.active):not(.file):not(.no-sep):not(.format)::after {
    content: "";
    position: absolute;
    right: 0;
    top: 5px;
    bottom: 5px;
    width: 1px;
    background: #aaa;
}

.tab.file {
    flex: 0 0 56px;
    margin-right: 3px;
    color: #fff;
    background: #ad4a4a;
    border: 1px solid #963c3c;
    border-radius: 3px 3px 0 0;
}

.tab.active {
    color: #17497a;
    background: #f3f3f3;
    border: 1px solid #aaa;
    border-bottom: none;
    border-radius: 4px 4px 0 0;
    box-shadow: 0 0 2px #888;
}

.tab.active::after {
    content: "";
    position: absolute;
    left: 6px;
    right: 6px;
    bottom: 0;
    height: 2px;
    background: #7f9db5;
}

.tab.format {
    flex: 0 0 74px;
    margin-left: 3px;
    background: #d5caa8;
    border: 1px solid #c9bc8c;
    border-bottom: none;
}

.tab-tools {
    display: flex;
    align-items: center;
    gap: 3px;
    flex: 0 0 83px;
    padding-left: 4px;
}

.collapse {
    margin-left: 10px;
    transform: rotate(180deg);
}

/* Ribbon */
.ribbon {
    display: grid;
    grid-template-columns: 110fr 97fr 103fr 159fr 176fr 52fr 40fr 138fr 13fr;
    height: 103px;
    flex: none;
    background: #f3f3f3;
    border-bottom: 2px solid #4b4b4b;
}

.group {
    display: flex;
    flex-direction: column;
    min-width: 0;
    border-right: 1px solid #c4c4c4;
}

.group-body {
    display: flex;
    height: 87px;
    padding: 2px 1px 1px;
}

.group-body.center {
    justify-content: center;
}

.group h2 {
    line-height: 14px;
    text-align: center;
    color: #808080;
    white-space: nowrap;
}

.stack {
    display: flex;
    flex-direction: column;
}

.pens {
    padding-left: 3px;
}

.icons {
    display: grid;
    grid-template-rows: repeat(3, 28px);
    grid-auto-flow: column;
    align-content: start;
    padding-left: 2px;
}

.markup {
    column-gap: 1px;
}

.tool {
    width: 28px;
    height: 28px;
}

.on {
    background: #e5d3a4;
    border: 1px solid #d5bf86;
}

.more {
    align-self: flex-end;
    width: 12px;
    height: 28px;
}

.rule {
    border-left: 1px solid #c4c4c4;
}

.big {
    flex: 1;
    flex-direction: column;
    justify-content: space-between;
    line-height: 13px;
    padding: 2px 0 2px;
}

.big .chev {
    display: inline;
}

.stamp {
    flex: 0 0 52px;
    margin-left: 1px;
    background: linear-gradient(#f6dfa6 0 54px, #c8b47f 54px 55px, #e5d09c 55px);
}

.group-body.rows {
    flex-direction: column;
    padding-left: 5px;
}

.row {
    justify-content: flex-start;
    height: 28px;
    gap: 4px;
}

/* Corner mark of a button that opens a list */
.drop {
    position: relative;
}

.drop::after {
    content: "";
    position: absolute;
    right: 0;
    bottom: 0;
    border: 2px solid #222;
    border-top-color: transparent;
    border-left-color: transparent;
}

.row .drop::after {
    right: -4px;
    bottom: -1px;
}

/* Document viewer */
.workspace {
    display: flex;
    flex: 1;
    min-height: 0;
}

.viewer {
    display: grid;
    grid-template-columns: 31px 1fr 16px 11px;
    grid-template-rows: 34px 1fr 32px;
    flex: 1;
    min-width: 0;
    background: repeating-conic-gradient(#858585 0 25%, #8e8e8e 0 50%) 0 0 / 4px 4px;
}

.doc-tabs {
    grid-column: 1 / 4;
    display: flex;
    align-items: center;
    gap: 2px;
    box-shadow: inset 0 -2px #f4f4f4;
}

.doc-tab {
    display: flex;
    justify-content: space-between;
    align-self: stretch;
    width: 100px;
    padding: 8px 5px 0;
    background: linear-gradient(#999, #999) center 29px / 89px 2px no-repeat #fff;
    border-radius: 0 4px 0 0;
}

.doc-tab b {
    color: #2a5b8d;
    font-weight: 400;
}

.doc-tab button {
    align-self: flex-start;
    margin-top: -3px;
}

.sq {
    width: 28px;
    height: 29px;
    background: #c5c5c5;
    border-radius: 2px;
}

.sq.close {
    width: 30px;
    margin-left: auto;
}

.sidebar {
    grid-row: 2 / 4;
    display: flex;
    flex-direction: column;
    align-items: center;
    min-height: 0;
    background: #f3f3f3;
}

.pin {
    align-self: stretch;
    justify-content: flex-end;
    height: 10px;
    padding-right: 2px;
    background: #dcdcdc;
}

.dots {
    width: 26px;
    height: 9px;
    margin: 3px 0 1px;
    background:
        repeating-linear-gradient(90deg, transparent 0 1px, #f3f3f3 1px 2px),
        repeating-linear-gradient(#999 0 1px, #f3f3f3 1px 2px);
}

.pane {
    position: relative;
    height: 28px;
    flex: none;
}

.pane.open::after {
    content: "";
    position: absolute;
    right: -3px;
    bottom: 1px;
    width: 4px;
    height: 4px;
    border-radius: 2px;
    background: #59a02e;
}

.sidebar hr {
    width: 28px;
    border: none;
    border-top: 1px solid #aaa;
    margin: 1px 0 3px;
}

.pane-more {
    height: 12px;
}

.canvas {
    display: flex;
    justify-content: center;
    min-width: 0;
    overflow: hidden;
    background:
        linear-gradient(rgba(0, 0, 0, 0.12), transparent 60%),
        repeating-conic-gradient(#a8a8a8 0 25%, #b2b2b2 0 50%) 0 0 / 4px 4px;
    box-shadow: inset 0 0 12px #444, inset 0 0 1px 1px #444;
}

.page {
    width: 340px;
    height: 100%;
    background: #fff;
    box-shadow: 0 0 16px #333;
}

.rooms,
.callouts {
    font-family: 'Liberation Sans', sans-serif;
    font-size: 5px;
    fill: #000;
}

.callouts {
    font-size: 3px;
}

.stamp-red,
.stamp-green {
    font-family: 'Liberation Serif', serif;
    font-weight: 700;
    text-anchor: middle;
    fill: #e84830;
    stroke: #e84830;
    stroke-width: 0.3;
}

.stamp-red rect {
    fill: none;
    stroke-width: 2;
}

.stamp-green {
    fill: #3ba44b;
    stroke: #3ba44b;
    stroke-width: 0.8;
}

.stamp-green rect {
    fill: #fff;
    fill-opacity: 0.5;
    stroke-width: 2;
}

.stamp-green .halo {
    fill: #cfe4f5;
    stroke: #2d7ac0;
    stroke-width: 3;
    stroke-dasharray: 1 1;
}

.scroll {
    display: flex;
    flex-direction: column;
    align-items: center;
    padding: 5px 0;
    background: #f3f3f3;
}

.scroll .chev {
    color: #777;
}

.up {
    transform: rotate(180deg);
}

.thumb {
    width: 5px;
    height: 26px;
    margin: 4px 0 auto;
    border-radius: 3px;
    background: #8a8a8a;
}

.gutter {
    grid-column: 4;
    grid-row: 1 / 4;
    display: flex;
    align-items: center;
    justify-content: center;
}

.gutter button {
    width: 9px;
    height: 60px;
    background: #ddd;
    border: 1px solid #777;
    border-radius: 3px;
}

.gutter .chev {
    transform: rotate(-90deg);
}

/* Status bar */
.statusbar {
    grid-column: 2 / 4;
    grid-row: 3;
    display: flex;
    align-items: center;
    justify-content: space-between;
    padding: 0 3px;
    background: #f3f3f3;
}

.wide {
    margin: 0 12px;
}

.page-no {
    display: flex;
    width: 90px;
    height: 22px;
    padding: 2px;
    background: #fff;
    border: 1px solid #aaa;
    border-radius: 3px;
}

.page-no input {
    flex: 1;
    min-width: 0;
    font: inherit;
    text-align: right;
    border: none;
    outline: none;
}

.page-no span {
    padding: 0 2px;
}

.page-no small {
    font-size: 9px;
    line-height: 13px;
    color: #555;
}

.bar {
    padding-left: 6px;
    border-left: 1px solid #bbb;
}

.statusbar .on {
    width: 26px;
    height: 28px;
}

.zoom {
    position: relative;
}

.zoom select {
    width: 82px;
    height: 22px;
    padding: 0 3px;
    font: inherit;
    color: #000;
    appearance: none;
    background: #fff;
    border: 1px solid #aaa;
    border-radius: 3px;
}

.zoom .chev {
    position: absolute;
    right: 4px;
    top: 8px;
}

.to-end {
    width: 8px;
    height: 8px;
    align-self: flex-start;
}

/* Properties pane */
.props {
    flex: 0 0 292px;
    min-width: 0;
    background: #fff;
    border-left: 2px solid #f7e0af;
}

.props-head {
    display: flex;
    justify-content: space-between;
    align-items: flex-start;
    height: 26px;
    padding: 4px 5px 0 3px;
    background: #f9e3b3;
}

.props-head button {
    padding-top: 1px;
}

.props table {
    width: 100%;
    table-layout: fixed;
    border-collapse: collapse;
}

.label-col {
    width: 107px;
}

.props tr {
    height: 23px;
}

.props th,
.props td {
    border-bottom: 1px solid #e2e2e2;
    line-height: 16px;
    white-space: nowrap;
}

.props th {
    padding-right: 3px;
    font-weight: 400;
    text-align: right;
    color: #6c6c6c;
    border-right: 1px solid #e2e2e2;
}

.props td {
    padding-left: 3px;
}

.props .guid {
    font-size: 11px;
}

.props .section {
    height: 20px;
    background: #f1f1f1;
}

.props .section th {
    padding-left: 4px;
    text-align: left;
    font-weight: 600;
    color: #666;
}

.section .chev {
    display: inline-block;
    margin-right: 5px;
    vertical-align: 1px;
}

.swatch,
.opacity {
    display: inline-block;
    vertical-align: middle;
    margin-right: 4px;
}

.swatch {
    width: 18px;
    height: 18px;
    border: 2px solid #f00;
    border-radius: 3px;
}
```
